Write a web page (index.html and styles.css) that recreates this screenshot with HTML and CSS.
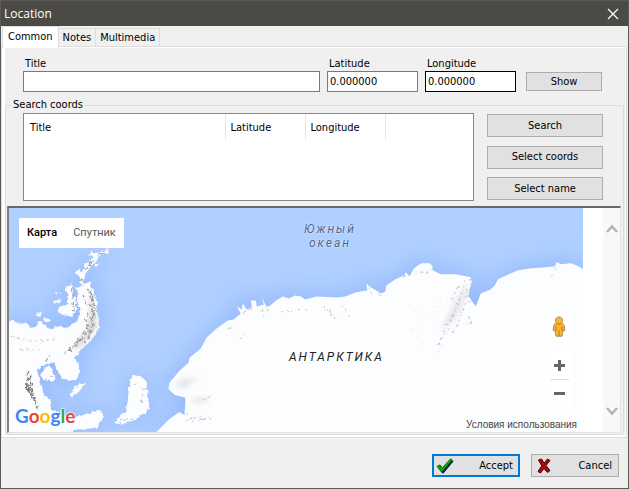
FILE: index.html
```html
<!DOCTYPE html>
<html lang="en">
<head>
<meta charset="utf-8">
<meta name="viewport" content="width=device-width, initial-scale=1">
<title>Location</title>
<link rel="stylesheet" href="styles.css">
</head>
<body>
<div class="window">
  <header class="titlebar">
    <h1 class="title">Location</h1>
    <button class="close" type="button" aria-label="Close">
      <svg width="12" height="12" viewBox="0 0 12 12"><path d="M1 1L11 11M11 1L1 11" stroke="#fff" stroke-width="1.2" fill="none"/></svg>
    </button>
  </header>

  <nav class="tabs" role="tablist">
    <button class="tab tab-active" type="button" role="tab" aria-selected="true">Common</button>
    <button class="tab" type="button" role="tab" aria-selected="false">Notes</button>
    <button class="tab" type="button" role="tab" aria-selected="false">Multimedia</button>
  </nav>

  <main class="page">
    <div class="sheet">
      <div class="fields">
        <div class="field">
          <label for="title">Title</label>
          <input id="title" type="text">
        </div>
        <div class="field">
          <label for="lat">Latitude</label>
          <input id="lat" type="text" value="0.000000">
        </div>
        <div class="field">
          <label for="lng">Longitude</label>
          <input id="lng" class="hot" type="text" value="0.000000">
        </div>
        <button class="btn btn-show" type="button">Show</button>
      </div>

      <fieldset class="group">
        <legend>Search coords</legend>
        <div class="search">
          <div class="list">
            <table class="list-table">
              <thead>
                <tr><th class="col-title">Title</th><th class="col-coord">Latitude</th><th class="col-coord">Longitude</th><th class="col-rest"></th></tr>
              </thead>
            </table>
          </div>
          <div class="actions">
            <button class="btn" type="button">Search</button>
            <button class="btn" type="button">Select coords</button>
            <button class="btn" type="button">Select name</button>
          </div>
        </div>

        <div class="browser">
          <div class="map">
            <svg class="terrain" viewBox="9 208 574 223" preserveAspectRatio="xMidYMid slice" aria-hidden="true">
              <defs>
                <filter id="glow" x="-10%" y="-10%" width="120%" height="120%"><feGaussianBlur stdDeviation="11"/></filter>
                <filter id="shade" x="-30%" y="-30%" width="160%" height="160%"><feGaussianBlur stdDeviation="2.500"/></filter>
                <filter id="rough" x="-5%" y="-5%" width="110%" height="110%">
                  <feTurbulence type="fractalNoise" baseFrequency="0.25" numOctaves="2" seed="4" result="n"/>
                  <feDisplacementMap in="SourceGraphic" in2="n" scale="4" xChannelSelector="R" yChannelSelector="G"/>
                </filter>
                <filter id="soft" x="-5%" y="-5%" width="110%" height="110%">
                  <feTurbulence type="fractalNoise" baseFrequency="0.3" numOctaves="2" seed="9" result="n"/>
                  <feDisplacementMap in="SourceGraphic" in2="n" scale="6" xChannelSelector="R" yChannelSelector="G"/>
                  <feGaussianBlur stdDeviation="0.6"/>
                </filter>
                <path id="main" d="M155 433L170 418L180 411L185 414L186 397L175 394L169 388L170 382L180 370L189 362L190 357L201 348L207 337L217 328L228 320L234 319L241 313L237 306L242 309L243 303L247 309L252 307L251 300L256 300L257 306L264 304L262 297L266 305L269 306L276 300L283 296L289 298L295 295L301 296L305 299L316 296L338 297L345 296L355 292L367 290L366 283L372 288L381 293L385 291L386 285L395 279L404 275L405 272L409 276L413 269L416 266L421 263L429 263L432 266L432 270L440 274L455 274L470 277L471 281L468 292L468 296L475 306L480 293L490 289L494 285L497 279L510 273L517 270L530 268L545 267L554 266L555 262L560 264L570 263L577 266L584 270V433Z"/>
                <path id="pen" d="M8 322L13 321L19 324L29 323L31 328L37 327L41 321L47 325L50 329L61 326L69 328L79 320L82 308L78 300L80 292L77 288L84 286L82 280L86 284L91 282L91 287L94 289L95 297L98 302L97 309L99 319L99 328L94 336L90 342L81 349L75 357L79 362L80 372L78 377L73 380L64 377L58 369L56 361L46 363L40 366L38 371L42 384L45 394L51 399L52 409L72 417L86 414L101 410L105 416L97 426L72 430L70 433H8Z"/>
                <g id="isles">
                  <path d="M81 282L80 274L76 273L80 269L83 274L86 265L93 259L94 253L98 254L108 249L108 252L101 254L97 260L91 266L86 273L84 281Z"/>
                  <path d="M67 287L72 284L74 292L76 300L77 309L73 316L65 314L59 311L61 307L70 304L69 295Z"/>
                  <path d="M55 301L62 299L61 302L56 303ZM90 255L93 251L94 254ZM96 263L99 264L97 266ZM38 314L42 312L41 316ZM46 318L51 320L47 322ZM57 292L60 293L57 294Z"/>
                  <path d="M46 368L50 365L54 370L56 378L54 380L46 379L42 375Z"/>
                  <path d="M71 394L77 385L85 383L79 391L73 395Z"/>
                  <path d="M131 379L135 375L141 376L147 381L147 386L141 388L148 390L147 395L150 401L149 408L145 413L140 415L134 419L123 423L117 422L119 418L127 410L129 401L130 391Z"/>
                </g>
              </defs>
              <rect x="9" y="208" width="574" height="223" fill="#b0d0ff"/>
              <g filter="url(#glow)" fill="#97bafc" stroke="#97bafc" stroke-width="8">
                <use href="#main"/><use href="#pen"/><use href="#isles" stroke-width="4"/>
              </g>
              <g filter="url(#rough)" fill="#fcfdff" stroke="#fcfdff" stroke-width="1">
                <use href="#pen"/><use href="#isles"/>
              </g>
              <use href="#main" fill="#fcfdff"/>
              <g filter="url(#shade)" fill="#e6e8ea">
                <path d="M467 282L464 300L456 318L440 330L452 304Z"/>
                <path d="M173 386L184 377L198 378L186 388ZM190 399L203 396L212 399L196 403Z"/>
                <path d="M91 292L96 310L97 326L84 344L72 352L88 330L91 312Z" fill="#d4d4d4"/>
              </g>
              <g filter="url(#soft)" fill="none" stroke="#999" stroke-width="1.400" stroke-dasharray="4 2">
                <path d="M82 281L82 276M86 270L95 260M100 255L106 251M72 288L75 299M74 302L75 312M88 287L93 300M92 290L95 307M90 303L96 316M88 312L97 328M94 316L91 335M89 325L83 340M85 332L77 345M80 339L69 350M77 346L65 353M93 330L85 343M86 318L90 332M96 307L93 321M84 294L87 305"/>
                <path d="M29 370L28 384L33 397M32 374L31 386L36 400M27 386L35 390M36 399L39 410M29 378L35 385" stroke="#777" stroke-width="1.500"/>
                <path d="M47 361L51 354" stroke="#bbb"/>
              </g>
              <g filter="url(#soft)" fill="none" stroke="#bfc1c4" stroke-width="1" stroke-dasharray="3 3">
                <path d="M261 311L269 305M264 318L268 309M281 311L292 311M298 309L309 308M322 307L330 311M330 313L336 318M341 304L349 316M244 312L251 308M229 328L233 325M240 339L245 334M187 420L188 410M192 420H200M203 418L212 417M12 336L40 341L58 338M21 349L40 350M47 379L55 374M119 421L133 417M135 385L139 382M145 393L140 403M73 392L80 386"/>
                <path d="M190 419L193 415L196 419L199 414L203 419L208 415M204 400L214 393"/>
                <path d="M465 280L461 293L456 307L449 322M470 278L466 292L463 308L457 323L452 333M467 294L469 307M458 286L451 300M453 313L441 332M449 327L436 346M432 267L428 272L416 272M554 268L551 277M467 316L470 323L466 325M403 277L405 272M368 286L371 293M378 293L382 297"/>
                <path d="M415 309L424 323M412 329L423 345M440 300L431 313M441 343L435 354" stroke="#eceef0"/>
              </g>
            </svg>
            <div class="map-types">
              <button class="map-type map-type-on" type="button">Карта</button>
              <button class="map-type" type="button">Спутник</button>
            </div>
            <p class="ocean">Южный<br>океан</p>
            <p class="continent">АНТАРКТИКА</p>
            <div class="brand"><span class="b">G</span><span class="r">o</span><span class="y">o</span><span class="b">g</span><span class="g">l</span><span class="r">e</span></div>
            <div class="map-tools">
              <button class="pegman" type="button" aria-label="Street View">
                <svg width="14" height="22" viewBox="0 0 14 22"><path d="M7 1C4.700 1 3.500 2.600 3.500 4.500C3.500 5.700 4 6.600 4.700 7.200C2.800 7.600 1.800 8.500 1.600 10.500L1.200 14.500L3.400 15.400L4 20.200H10L10.600 15.400L12.800 14.500L12.400 10.500C12.200 8.500 11.200 7.600 9.300 7.200C10 6.600 10.500 5.700 10.500 4.500C10.500 2.600 9.300 1 7 1Z" fill="#fbb829" stroke="#a48a60" stroke-width="1"/><path d="M4.700 7.400Q7 9 9.300 7.400M4 10V15M10 10V15M7 14V20" stroke="#cf7d1d" stroke-width="1.200" fill="none"/></svg>
              </button>
              <div class="zoom">
                <button type="button" aria-label="Zoom in"><svg width="11" height="11" viewBox="0 0 11 11"><path d="M5.500 0V11M0 5.500H11" stroke="#666" stroke-width="3"/></svg></button>
                <button type="button" aria-label="Zoom out"><svg width="11" height="11" viewBox="0 0 11 11"><path d="M0 5.500H11" stroke="#666" stroke-width="3"/></svg></button>
              </div>
            </div>
            <a class="terms" href="#">Условия использования</a>
          </div>
          <div class="scrollbar">
            <button type="button" aria-label="Scroll up"><svg width="12" height="10" viewBox="0 0 12 10"><path d="M1 8L6 2.500L11 8" fill="none" stroke="#b5b5b5" stroke-width="2.600"/></svg></button>
            <button type="button" aria-label="Scroll down"><svg width="12" height="10" viewBox="0 0 12 10"><path d="M1 2L6 7.500L11 2" fill="none" stroke="#b5b5b5" stroke-width="2.600"/></svg></button>
          </div>
        </div>
      </fieldset>
    </div>
  </main>

  <footer class="footer">
    <button class="btn btn-icon btn-default" type="button">
      <svg width="18" height="16" viewBox="0 0 18 16"><path d="M1.500 8.500L4 7L6.500 10L14.500 1L17 2.500L7 14.500H5.500Z" fill="#0a1a50" transform="translate(.6 .8)"/><path d="M1 8.300L4 6.800L6.300 9.800L14.500 .8L16.300 2L6.600 13.500H5Z" fill="#08a808" stroke="#064f10" stroke-width=".7"/></svg>
      <span>Accept</span>
    </button>
    <button class="btn btn-icon" type="button">
      <svg width="14" height="16" viewBox="0 0 14 16"><path d="M1.500 2L4.500 1L7.200 5L10.500 1L13 2.500L9 7.500L13 12.500L10.500 14.500L7 10.500L3.500 15L1 13.500L4.800 7.800Z" fill="#a80808" stroke="#500008" stroke-width="1"/></svg>
      <span>Cancel</span>
    </button>
  </footer>
</div>
</body>
</html>
```
FILE: styles.css
```css
* { box-sizing: border-box; }

body {
  margin: 0;
  background: #f0f0f0;
  color: #000;
  font: 11px/14px "DejaVu Sans Condensed", "DejaVu Sans", sans-serif;
}

button, input { font: inherit; color: inherit; margin: 0; }
button { padding: 0; border: 0; background: none; }
svg { display: block; }
p { margin: 0; }

.window {
  display: flex;
  flex-direction: column;
  min-height: 100vh;
  border: 1px solid #5a5956;
  background: #f0f0f0;
}

.titlebar {
  display: flex;
  align-items: center;
  justify-content: space-between;
  height: 25px;
  padding: 0 9px 0 3px;
  background: #4b4a47;
  color: #fff;
}
.title { margin: 0; font: 12px/16px "Open Sans", "Noto Sans", sans-serif; }

.tabs { display: flex; align-items: flex-end; height: 20px; padding-left: 1px; }
.tab {
  height: 18px;
  padding: 0 4px;
  border: 1px solid #dcdcdc;
  border-width: 1px 1px 0 0;
}
.tab-active {
  position: relative;
  align-self: flex-start;
  height: 22px;
  padding: 0 5px 2px;
  border-left-width: 1px;
  background: #fff;
}

.page {
  display: flex;
  flex: 1;
  margin-right: 1px;
  padding: 1px 1px 2px 3px;
  border: 1px solid #dcdcdc;
  background: #fff;
}
.sheet { display: flex; flex: 1; flex-direction: column; background: #f0f0f0; }

.fields {
  display: grid;
  grid-template-columns: 1fr 91px 91px 76px;
  column-gap: 7px;
  align-items: end;
  padding: 9px 26px 6px 18px;
}
.field { display: flex; flex-direction: column; }
.field label { padding-left: 2px; }
.field input {
  width: 100%;
  height: 21px;
  padding: 0 2px;
  border: 1px solid #7a7a7a;
  border-radius: 0;
  background: #fff;
}
.field .hot { border-color: #000; }

.btn {
  height: 23px;
  border: 1px solid #adadad;
  background: #e1e1e1;
  text-align: center;
}
.btn-show { height: 19px; margin: 0 0 1px 3px; width: 76px; }

.group {
  display: flex;
  flex: 1;
  flex-direction: column;
  min-width: 0;
  margin: 0 1px 0 0;
  padding: 1px 2px 1px 1px;
  border: 1px solid #dcdcdc;
}
.group legend { margin-left: 4px; padding: 0 2px; }

.search {
  display: grid;
  grid-template-columns: 1fr 116px;
  column-gap: 13px;
  padding: 0 18px 5px 16px;
}
.list { height: 88px; border: 1px solid #828790; background: #fff; }
.list-table { width: 100%; border-collapse: collapse; table-layout: fixed; }
.list-table th {
  height: 26px;
  padding: 2px 6px 0;
  border-right: 1px solid #e5e5e5;
  font-weight: normal;
  text-align: left;
}
.list-table .col-coord { width: 80px; padding-left: 5px; }
.list-table .col-rest { width: 88px; border-right: 0; }
.actions { display: flex; flex-direction: column; justify-content: space-between; padding: 1px 0; }

.browser {
  display: flex;
  flex: 1;
  min-height: 226px;
  border: 1px solid #e3e3e3;
  border-top: 2px solid #696969;
  border-left: 2px solid #808080;
  background: #fff;
}
.map { position: relative; flex: 1; margin-right: 20px; overflow: hidden; }
.terrain { position: absolute; inset: 0; width: 100%; height: 100%; }

.map-types { position: absolute; top: 10px; left: 10px; display: flex; height: 30px; background: #fff; }
.map-type { padding: 0 8px; color: #565656; font: 11px/14px Roboto, sans-serif; }
.map-type-on { color: #000; font-weight: 500; }

.ocean {
  position: absolute;
  top: 14px;
  left: 295px;
  color: #50688f;
  font: italic 12px/14px Roboto, sans-serif;
  letter-spacing: 2px;
  text-align: center;
  text-shadow: 0 0 2px #d8e8ff, 0 0 2px #d8e8ff;
}
.continent {
  position: absolute;
  top: 142px;
  left: 280px;
  color: #222;
  font: italic 12px/14px Roboto, sans-serif;
  letter-spacing: 2px;
}
.brand {
  position: absolute;
  bottom: 3px;
  left: 6px;
  font: 700 19px/26px Lato, sans-serif;
  text-shadow: 0 0 2px #fff, 0 0 2px #fff, 0 0 2px #fff;
}
.b { color: #4285f4; }
.r { color: #ea4335; }
.y { color: #fbbc05; }
.g { color: #34a853; }

.map-tools { position: absolute; right: 10px; bottom: 25px; display: flex; flex-direction: column; gap: 10px; width: 28px; }
.pegman, .zoom { display: grid; justify-items: center; background: #fff; }
.pegman { height: 28px; place-items: center; }
.zoom button { display: grid; place-items: center; width: 19px; height: 28px; }
.zoom button + button { border-top: 1px solid #e0e0e0; }
.terms {
  position: absolute;
  right: 6px;
  bottom: 0;
  color: #444;
  font: 10px/14px "Liberation Sans", sans-serif;
  text-decoration: none;
}

.scrollbar {
  display: flex;
  flex-direction: column;
  justify-content: space-between;
  align-items: center;
  width: 17px;
  padding: 16px 0;
  background: #f8f8f8;
}

.footer { display: flex; justify-content: flex-end; gap: 11px; padding: 16px 9px 11px; }
.btn-icon {
  display: flex;
  align-items: center;
  justify-content: space-between;
  width: 88px;
  padding: 0 6px 0 5px;
}
.btn-default { border: 2px solid #0078d7; padding: 0 5px 0 2px; }
```
